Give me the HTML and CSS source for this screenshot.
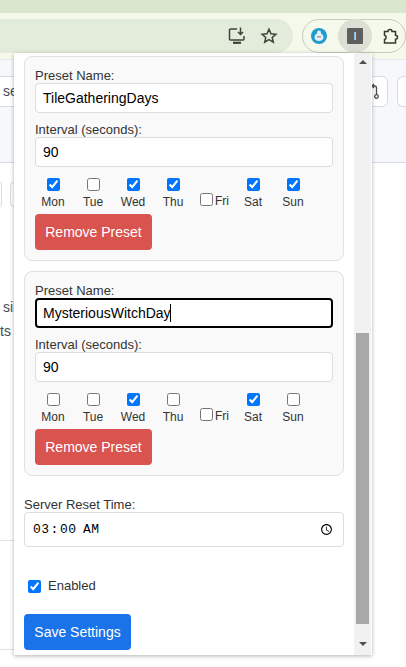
FILE: index.html
```html
<!DOCTYPE html>
<html lang="en">
  <head>
    <meta charset="UTF-8" />
    <meta name="viewport" content="width=device-width, initial-scale=1.0" />
    <title>Preset Settings</title>
    <link rel="stylesheet" href="styles.css">
  </head>
  <body>
    <div class="tabstrip"></div>
    <div class="toolbar">
      <div class="omnibox">
        <svg class="omni-icon" width="18" height="18" viewBox="0 0 18 18" fill="none" stroke="#3c4438" stroke-width="1.5">
          <path d="M9 2H2.500a1 1 0 0 0-1 1v9a1 1 0 0 0 1 1h12.500a1 1 0 0 0 1-1V9" />
          <path d="M5 15.800h8" stroke-width="2.200" />
          <path d="M12.500 .5v6.500M10 5l2.500 2.500L15 5" />
        </svg>
        <svg class="omni-icon" width="18" height="18" viewBox="0 0 18 18" fill="none" stroke="#3c4438" stroke-width="1.500">
          <path d="M9 2.200l2 4.500 4.900.5-3.700 3.200 1.100 4.800L9 12.700l-4.300 2.500 1.100-4.800L2.100 7.200l4.900-.5z" />
        </svg>
      </div>
      <div class="ext-pill">
        <svg class="ext-logo" width="16" height="16" viewBox="0 0 16 16">
          <circle cx="8" cy="8" r="8" fill="#1f9bd1" />
          <path d="M3.500 9.500a4.500 4.500 0 0 1 9 0c0 2-2 3.500-4.500 3.500s-4.500-1.500-4.500-3.500z" fill="#e8eef2" />
          <circle cx="8" cy="4.500" r="2" fill="#e8eef2" />
          <rect x="6" y="8" width="4" height="1.500" fill="#7fa9bf" />
        </svg>
        <div class="ext-active"><span class="ext-square">I</span></div>
        <svg class="ext-puzzle" width="17" height="17" viewBox="0 0 17 17" fill="none" stroke="#2f3a2b" stroke-width="1.500">
          <path d="M1.500 3.500h3.500a2 2 0 0 1 4 0h3.500v3.700a2 2 0 0 1 0 4v3.800H1.500v-3.500a2.200 2.200 0 0 0 0-4.300z" />
        </svg>
      </div>
    </div>

    <div class="page">
      <div class="page-head">
        <div class="chip chip-left">se</div>
        <div class="chip-group">
          <div class="chip chip-branch">
            <svg width="10" height="17" viewBox="0 0 10 17" fill="none" stroke="#444c56" stroke-width="1.300">
              <path d="M3 1L1 3l2 2M1 3h2.500a2 2 0 0 1 2 2v6.500" />
              <circle cx="5.500" cy="13.500" r="1.800" />
            </svg>
          </div>
          <div class="chip chip-next"></div>
        </div>
      </div>
      <div class="page-tools">
        <div class="tool tool-a"></div>
        <div class="tool tool-b"></div>
      </div>
      <div class="page-line line-a">sil</div>
      <div class="page-line line-b">ts</div>
      <div class="page-rule rule-a"></div>
      <div class="page-rule rule-b"></div>
    </div>

    <div class="popup">
      <form class="popup-body">
        <div class="preset">
          <label class="field-label">Preset Name:</label>
          <input class="field" type="text" value="TileGatheringDays" />
          <label class="field-label">Interval (seconds):</label>
          <input class="field" type="number" value="90" />
          <div class="days">
            <label class="day"><input type="checkbox" checked /><span>Mon</span></label>
            <label class="day"><input type="checkbox" /><span>Tue</span></label>
            <label class="day"><input type="checkbox" checked /><span>Wed</span></label>
            <label class="day"><input type="checkbox" checked /><span>Thu</span></label>
            <label class="day day-inline"><input type="checkbox" /><span>Fri</span></label>
            <label class="day"><input type="checkbox" checked /><span>Sat</span></label>
            <label class="day"><input type="checkbox" checked /><span>Sun</span></label>
          </div>
          <button class="btn btn-remove" type="button">Remove Preset</button>
        </div>

        <div class="preset">
          <label class="field-label">Preset Name:</label>
          <div class="field-wrap">
            <input class="field field-focus" type="text" value="MysteriousWitchDay" />
            <span class="caret"></span>
          </div>
          <label class="field-label">Interval (seconds):</label>
          <input class="field" type="number" value="90" />
          <div class="days">
            <label class="day"><input type="checkbox" /><span>Mon</span></label>
            <label class="day"><input type="checkbox" /><span>Tue</span></label>
            <label class="day"><input type="checkbox" checked /><span>Wed</span></label>
            <label class="day"><input type="checkbox" /><span>Thu</span></label>
            <label class="day day-inline"><input type="checkbox" /><span>Fri</span></label>
            <label class="day"><input type="checkbox" checked /><span>Sat</span></label>
            <label class="day"><input type="checkbox" /><span>Sun</span></label>
          </div>
          <button class="btn btn-remove" type="button">Remove Preset</button>
        </div>

        <label class="field-label reset-label">Server Reset Time:</label>
        <input class="field time-field" type="time" value="03:00" />

        <label class="enabled"><input type="checkbox" checked /><span>Enabled</span></label>

        <button class="btn btn-save" type="button">Save Settings</button>
      </form>

      <div class="scrollbar">
        <div class="arrow arrow-up"></div>
        <div class="thumb"></div>
        <div class="arrow arrow-down"></div>
      </div>
    </div>
  </body>
</html>
```

FILE: styles.css
```css
html,
body {
  height: 100%;
}
body {
  font-family: "Liberation Sans", Arial, sans-serif;
  font-size: 13px;
  margin: 0;
  padding: 0;
  overflow: hidden;
  background-color: #ffffff;
  color: #333333;
}

/* browser chrome */
.tabstrip {
  height: 13px;
  background-color: #d9e8cc;
}
.toolbar {
  height: 46px;
  background-color: #f4f9ec;
  display: flex;
  align-items: flex-start;
  padding-top: 6px;
  box-sizing: border-box;
}
.omnibox {
  width: 293px;
  height: 34px;
  background-color: #e3ecdb;
  border-radius: 0 17px 17px 0;
  display: flex;
  justify-content: flex-end;
  align-items: center;
  gap: 14px;
  padding-right: 15px;
  box-sizing: border-box;
  flex-shrink: 0;
}
.ext-pill {
  width: 104px;
  height: 34px;
  margin-left: 9px;
  border: 1px solid #c5cbbd;
  border-radius: 17px;
  box-sizing: border-box;
  display: flex;
  align-items: center;
  padding-left: 8px;
  flex-shrink: 0;
}
.ext-logo {
  flex-shrink: 0;
}
.ext-active {
  width: 34px;
  height: 34px;
  margin-left: 11px;
  border-radius: 50%;
  background-color: #dcdfd3;
  display: flex;
  align-items: center;
  justify-content: center;
  flex-shrink: 0;
}
.ext-square {
  width: 16px;
  height: 16px;
  background-color: #5f5f5f;
  border-radius: 1px;
  color: #ffffff;
  font-size: 11px;
  line-height: 16px;
  text-align: center;
}
.ext-puzzle {
  margin-left: 11px;
  flex-shrink: 0;
}

/* page behind the popup */
.page-head {
  height: 104px;
  background-color: #f6f8fb;
  border-bottom: 1px solid #d5dce5;
  border-top: 1px solid #e4e9ee;
  box-sizing: border-box;
  display: flex;
  justify-content: space-between;
  padding-top: 16px;
}
.chip {
  height: 31px;
  background-color: #ffffff;
  border: 1px solid #d5dce5;
  border-radius: 6px;
  box-sizing: border-box;
  font-size: 14px;
  color: #444c56;
  line-height: 29px;
}
.chip-left {
  width: 30px;
  border-left: none;
  border-radius: 0 6px 6px 0;
  padding-left: 3px;
  overflow: hidden;
}
.chip-group {
  display: flex;
  gap: 9px;
}
.chip-branch {
  width: 48px;
  display: flex;
  justify-content: flex-end;
  align-items: center;
  padding-right: 6px;
}
.chip-next {
  width: 9px;
  border-right: none;
  border-radius: 6px 0 0 6px;
}
.page-tools {
  display: flex;
  gap: 8px;
}
.tool {
  height: 25px;
  border: 1px solid #d5dce5;
  border-radius: 4px;
  box-sizing: border-box;
  margin-top: 19px;
}
.tool-a {
  width: 2px;
  border-left: none;
  border-radius: 0 4px 4px 0;
}
.tool-b {
  width: 22px;
}
.page-line {
  font-size: 14px;
  color: #444c56;
  line-height: 24px;
  padding-left: 3px;
}
.line-a {
  margin-top: 88px;
}
.line-b {
  padding-left: 0;
}
.page-rule {
  height: 1px;
  background-color: #dde3ea;
  width: 20px;
}
.rule-a {
  margin-top: 197px;
}
.rule-b {
  margin-top: 108px;
}

/* popup */
.popup {
  position: absolute;
  left: 14px;
  top: 53px;
  width: 358px;
  height: 602px;
  background-color: #ffffff;
  display: flex;
  box-shadow: 0 1px 4px rgba(60, 64, 50, 0.4);
}
.popup-body {
  flex: 1;
  padding: 3px 10px 0;
  overflow: hidden;
}
.preset {
  background-color: #f9f9f9;
  border: 1px solid #e0e0e0;
  border-radius: 8px;
  padding: 11px 10px 10px;
  margin-bottom: 10px;
  height: 205px;
  box-sizing: border-box;
}
.field-label {
  display: block;
  line-height: 15px;
  color: #333333;
}
.field-wrap {
  position: relative;
}
.field {
  display: block;
  width: 100%;
  height: 30px;
  box-sizing: border-box;
  padding: 4px 7px;
  margin: 0 0 9px;
  font-family: "Liberation Sans", Arial, sans-serif;
  font-size: 14px;
  color: #000000;
  background-color: #ffffff;
  border: 1px solid #dddddd;
  border-radius: 4px;
}
.field-focus {
  border: 2px solid #000000;
  padding: 4px 6px;
  outline: none;
}
.caret {
  position: absolute;
  left: 135px;
  top: 6px;
  width: 1px;
  height: 18px;
  background-color: #000000;
}
.days {
  display: grid;
  grid-template-columns: repeat(7, 40px);
  margin: 0 0 0 -2px;
  height: 38px;
}
.day {
  display: flex;
  flex-direction: column;
  align-items: center;
  font-size: 12px;
  color: #333333;
}
.day input {
  margin: 2px 0 4px;
  width: 13px;
  height: 13px;
}
.day-inline {
  flex-direction: row;
  justify-content: center;
  align-items: flex-start;
  gap: 2px;
  padding: 17px 0 0 3px;
  height: 38px;
  box-sizing: border-box;
}
.day-inline input {
  margin: 0;
}
.day-inline span {
  padding-top: 1px;
}
.btn {
  display: block;
  height: 36px;
  border: none;
  border-radius: 4px;
  color: #ffffff;
  font-family: "Liberation Sans", Arial, sans-serif;
  font-size: 14px;
  cursor: pointer;
}
.btn-remove {
  width: 117px;
  background-color: #d9534f;
}
.btn-save {
  width: 107px;
  background-color: #1a73e8;
}
.reset-label {
  margin-top: 21px;
}
.time-field {
  height: 35px;
  padding-right: 6px;
  font-family: "Liberation Mono", monospace;
  font-size: 13px;
  letter-spacing: 0.5px;
  margin-bottom: 0;
}
.enabled {
  display: flex;
  align-items: center;
  gap: 7px;
  margin: 31px 0 20px 4px;
  line-height: 16px;
}
.enabled input {
  margin: 0;
  width: 13px;
  height: 13px;
}

/* scrollbar */
.scrollbar {
  width: 17px;
  background-color: #f1f1f1;
  display: flex;
  flex-direction: column;
  align-items: center;
  margin-right: 1px;
}
.arrow {
  width: 0;
  height: 0;
  border-left: 4px solid transparent;
  border-right: 4px solid transparent;
}
.arrow-up {
  margin-top: 7px;
  border-bottom: 4px solid #505050;
}
.arrow-down {
  margin-top: 18px;
  border-top: 4px solid #505050;
}
.thumb {
  width: 13px;
  height: 291px;
  margin-top: 269px;
  background-color: #a8a8a8;
}
```
